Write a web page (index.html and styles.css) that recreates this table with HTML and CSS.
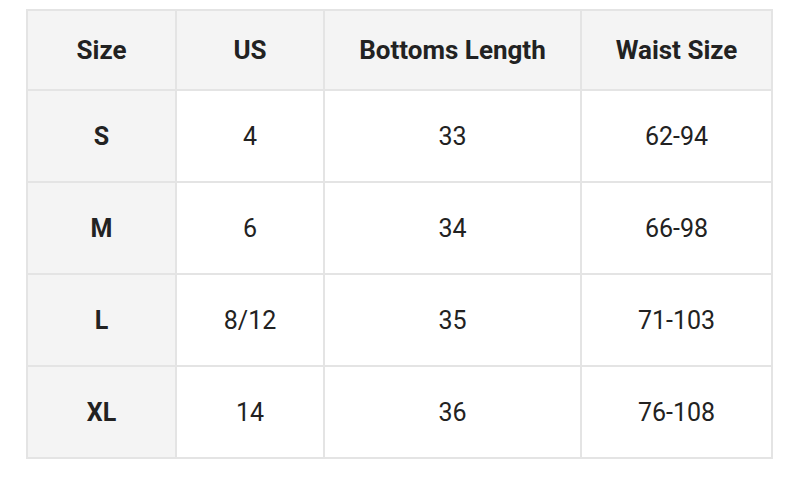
FILE: index.html
```html
<!DOCTYPE html>
<html>
<head>
<meta charset="utf-8">
<link rel="stylesheet" href="styles.css">
</head>
<body>
<table class="size-table">
  <colgroup>
    <col class="c1"><col class="c2"><col class="c3"><col class="c4">
  </colgroup>
  <thead>
    <tr><th>Size</th><th>US</th><th>Bottoms Length</th><th>Waist Size</th></tr>
  </thead>
  <tbody>
    <tr><th>S</th><td>4</td><td>33</td><td>62-94</td></tr>
    <tr><th>M</th><td>6</td><td>34</td><td>66-98</td></tr>
    <tr><th>L</th><td>8/12</td><td>35</td><td>71-103</td></tr>
    <tr><th>XL</th><td>14</td><td>36</td><td>76-108</td></tr>
  </tbody>
</table>
</body>
</html>
```
FILE: styles.css
```css
html, body {
  margin: 0;
  padding: 0;
  background: #fff;
}
body {
  font-family: Roboto, "Liberation Sans", sans-serif;
  color: #222;
}
.size-table {
  margin: 9px 0 0 26px;
  border-collapse: separate;
  border-spacing: 0;
  table-layout: fixed;
  width: 747px;
  border-top: 2px solid #e4e4e4;
  border-left: 2px solid #e4e4e4;
}
.c1 { width: 149px; }
.c2 { width: 148px; }
.c3 { width: 257px; }
.c4 { width: 191px; }
.size-table th,
.size-table td {
  box-sizing: border-box;
  border-right: 2px solid #e4e4e4;
  border-bottom: 2px solid #e4e4e4;
  text-align: center;
  vertical-align: middle;
  padding: 0;
  font-size: 25px;
  height: 92px;
}
.size-table thead th {
  height: 80px;
  background: #f4f4f4;
  font-weight: 700;
  font-size: 26px;
}
.size-table tbody th {
  background: #f4f4f4;
  font-weight: 700;
  font-size: 25px;
}
.size-table td {
  font-weight: 400;
}
```
